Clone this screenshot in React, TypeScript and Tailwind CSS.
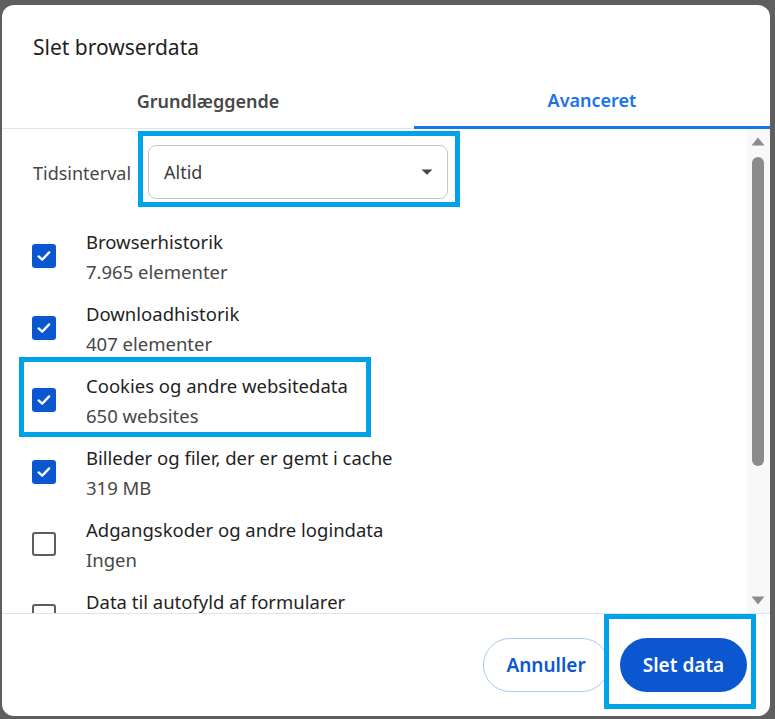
import React from "react";

const FONT = { fontFamily: '"Noto Sans", "Open Sans", Arial, sans-serif' };

function Check({ checked }: { checked: boolean }) {
  if (checked) {
    return (
      <div className="flex h-[24px] w-[24px] items-center justify-center rounded-[3px] bg-[#0b57d0]">
        <svg width="18" height="18" viewBox="0 0 18 18">
          <path d="M3.6 9.4 L7.2 12.6 L14.2 5.4" fill="none" stroke="white" strokeWidth="2.3" strokeLinecap="round" strokeLinejoin="round" />
        </svg>
      </div>
    );
  }
  return <div className="h-[24px] w-[24px] rounded-[3px] border-[2.5px] border-[#5e5e5e]" />;
}

function Item({
  title,
  sub,
  checked,
  highlight,
}: {
  title: string;
  sub: string;
  checked: boolean;
  highlight?: boolean;
}) {
  return (
    <div className="relative flex h-[72px] shrink-0 items-center">
      <div className="flex w-[84px] shrink-0 pl-[30px]">
        <Check checked={checked} />
      </div>
      <div className="flex flex-col gap-[6px] pt-[1px]">
        <div className="text-[18.5px] leading-[24px] text-[#1f1f1f] whitespace-nowrap">{title}</div>
        <div className="text-[18.5px] leading-[24px] text-[#474747] whitespace-nowrap">{sub}</div>
      </div>
      {highlight && (
        <div className="pointer-events-none absolute left-[17px] top-[-7px] bottom-[-1px] w-[352px] border-[5px] border-[#00a2e8]" />
      )}
    </div>
  );
}

export default function App() {
  return (
    <div
      className="h-[719px] w-[775px] bg-[#5f5f5f] pb-[3px] pl-[2px] pr-[5px] pt-[5px]"
      style={FONT}
    >
      <div className="flex h-full flex-col overflow-hidden rounded-[12px] bg-white">
        {/* Title */}
        <div className="h-[70px] shrink-0 pl-[31px] pt-[28px] text-[21px] leading-[28px] text-[#1f1f1f]">
          Slet browserdata
        </div>
        {/* Tabs */}
        <div className="flex h-[54px] shrink-0">
          <div className="flex w-[412px] items-center justify-center border-b border-[#e3e3e3] text-[18px] font-semibold text-[#474747]">
            Grundlæggende
          </div>
          <div className="flex flex-1 items-center justify-center border-b-[3px] border-[#1a73e8] text-[18px] font-semibold text-[#1a73e8]">
            Avanceret
          </div>
        </div>
        {/* Scroll area */}
        <div className="flex min-h-0 flex-1">
          <div className="flex min-w-0 flex-1 flex-col overflow-hidden">
            <div className="flex h-[91px] shrink-0 items-start pl-[31px]">
              <div className="mt-[32px] w-[115px] shrink-0 text-[18px] leading-[24px] text-[#474747]">
                Tidsinterval
              </div>
              <div className="relative mt-[16px] flex h-[54px] w-[300px] items-center justify-between rounded-[8px] border border-[#c7c7c7] pl-[15px] pr-[14px]">
                <span className="text-[18px] text-[#3c3c3c]">Altid</span>
                <svg width="12" height="6" viewBox="0 0 12 6">
                  <path d="M0.5 0.5 L11.5 0.5 L6 5.8 Z" fill="#474747" />
                </svg>
                <div className="pointer-events-none absolute left-[-11px] right-[-13px] top-[-15px] bottom-[-9px] border-[5px] border-[#00a2e8]" />
              </div>
            </div>
            <Item title="Browserhistorik" sub="7.965 elementer" checked />
            <Item title="Downloadhistorik" sub="407 elementer" checked />
            <Item title="Cookies og andre websitedata" sub="650 websites" checked highlight />
            <Item title="Billeder og filer, der er gemt i cache" sub="319 MB" checked />
            <Item title="Adgangskoder og andre logindata" sub="Ingen" checked={false} />
            <Item title="Data til autofyld af formularer" sub="Ingen" checked={false} />
          </div>
          {/* Scrollbar */}
          <div className="flex w-[23px] shrink-0 flex-col items-center bg-[#f8f8f8] pr-[1px]">
            <svg className="mt-[8px]" width="14" height="9" viewBox="0 0 14 9">
              <path d="M7 0.5 L13.5 8.5 L0.5 8.5 Z" fill="#8b8b8b" />
            </svg>
            <div className="mt-[11px] h-[309px] w-[12px] rounded-[6px] bg-[#8b8b8b]" />
            <div className="flex-1" />
            <svg className="mb-[8px]" width="14" height="9" viewBox="0 0 14 9">
              <path d="M0.5 0.5 L13.5 0.5 L7 8.5 Z" fill="#8b8b8b" />
            </svg>
          </div>
        </div>
        {/* Footer */}
        <div className="flex h-[103px] shrink-0 items-center justify-end gap-[11px] border-t border-[#e3e3e3] pr-[23px]">
          <div className="flex h-[54px] w-[126px] items-center justify-center rounded-full border border-[#a8c7fa] text-[19px] font-semibold text-[#0b57d0]">
            Annuller
          </div>
          <div className="relative flex h-[54px] w-[127px] items-center justify-center rounded-full bg-[#0b57d0] text-[19px] font-semibold text-white">
            Slet data
            <div className="pointer-events-none absolute left-[-16px] right-[-9px] top-[-24px] bottom-[-17px] border-[5px] border-[#00a2e8]" />
          </div>
        </div>
      </div>
    </div>
  );
}
